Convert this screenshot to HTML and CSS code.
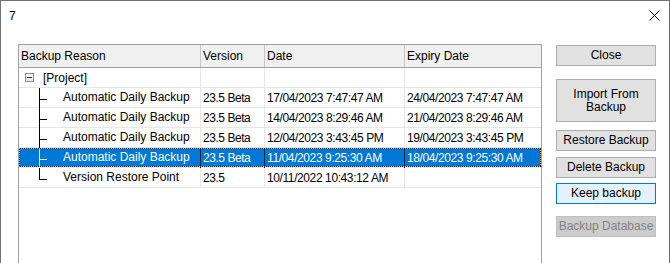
FILE: index.html
```html
<!DOCTYPE html>
<html>
<head>
<meta charset="utf-8">
<link rel="stylesheet" href="styles.css">
</head>
<body>
<div class="window">
  <div class="titlebar">
    <span class="title">7</span>
    <svg class="close-x" width="11" height="11" viewBox="0 0 11 11"><path d="M0.5 0.5 L10.5 10.5 M10.5 0.5 L0.5 10.5" stroke="#000" stroke-width="1" fill="none"/></svg>
  </div>
  <div class="content">
    <div class="listview">
      <div class="row header">
        <div class="cell c1">Backup Reason</div>
        <div class="cell">Version</div>
        <div class="cell">Date</div>
        <div class="cell">Expiry Date</div>
      </div>
      <div class="row">
        <div class="cell c1 root"><span class="minus"></span><span class="root-text">[Project]</span></div>
        <div class="cell"></div>
        <div class="cell"></div>
        <div class="cell"></div>
      </div>
      <div class="row">
        <div class="cell c1 child"><span class="twig"></span><span class="label">Automatic Daily Backup</span></div>
        <div class="cell ver">23.5 Beta</div>
        <div class="cell date">17/04/2023 7:47:47 AM</div>
        <div class="cell date">24/04/2023 7:47:47 AM</div>
      </div>
      <div class="row">
        <div class="cell c1 child"><span class="twig"></span><span class="label">Automatic Daily Backup</span></div>
        <div class="cell ver">23.5 Beta</div>
        <div class="cell date">14/04/2023 8:29:46 AM</div>
        <div class="cell date">21/04/2023 8:29:46 AM</div>
      </div>
      <div class="row">
        <div class="cell c1 child"><span class="twig"></span><span class="label">Automatic Daily Backup</span></div>
        <div class="cell ver">23.5 Beta</div>
        <div class="cell date">12/04/2023 3:43:45 PM</div>
        <div class="cell date">19/04/2023 3:43:45 PM</div>
      </div>
      <div class="row selected">
        <div class="cell c1 child"><span class="twig"></span><span class="label">Automatic Daily Backup</span></div>
        <div class="cell ver">23.5 Beta</div>
        <div class="cell date">11/04/2023 9:25:30 AM</div>
        <div class="cell date">18/04/2023 9:25:30 AM</div>
      </div>
      <div class="row">
        <div class="cell c1 child"><span class="twig last"></span><span class="label">Version Restore Point</span></div>
        <div class="cell ver">23.5</div>
        <div class="cell date">10/11/2022 10:43:12 AM</div>
        <div class="cell date"></div>
      </div>
    </div>
    <div class="buttons">
      <div class="btn btn-close">Close</div>
      <div class="btn btn-import">Import From<br>Backup</div>
      <div class="btn btn-restore">Restore Backup</div>
      <div class="btn btn-delete">Delete Backup</div>
      <div class="btn btn-keep">Keep backup</div>
      <div class="btn btn-db disabled">Backup Database</div>
    </div>
  </div>
</div>
</body>
</html>
```
FILE: styles.css
```css
html, body {
  margin: 0;
  padding: 0;
  background: #ffffff;
  overflow: hidden;
}
body {
  width: 670px;
  height: 263px;
  font-family: "Liberation Sans", Arial, sans-serif;
  font-size: 12px;
  color: #000;
}
.window {
  box-sizing: border-box;
  width: 670px;
  height: 263px;
  border: 1px solid #707070;
  border-bottom: none;
  background: #fff;
  display: flex;
  flex-direction: column;
}
.titlebar {
  height: 43px;
  flex: none;
  box-sizing: border-box;
  padding: 7px 9px 0 8px;
  display: flex;
  justify-content: space-between;
  align-items: flex-start;
}
.title {
  line-height: 16px;
}
.close-x {
  margin-top: 2px;
}
.content {
  flex: 1;
  display: flex;
  padding-left: 17px;
  min-height: 0;
}
.listview {
  width: 524px;
  box-sizing: border-box;
  border: 1px solid #a0a0a0;
  border-bottom: none;
  background: #fff;
}
.row {
  display: grid;
  grid-template-columns: 181px 64px 140px 137px;
  height: 20px;
  box-sizing: border-box;
  border-bottom: 1px solid #e6e6e6;
  position: relative;
}
.row.header {
  height: 23px;
  background: #f0f0f0;
  border-bottom: 1px solid #a0a0a0;
}
.cell {
  display: flex;
  align-items: center;
  padding-left: 2px;
  border-left: 1px solid #e6e6e6;
  white-space: nowrap;
  overflow: visible;
  min-width: 0;
}
.row.header .cell {
  border-left-color: #c8c8c8;
}
.cell.c1 {
  border-left: none;
}
.cell.date {
  letter-spacing: -0.4px;
}
.cell.ver {
  letter-spacing: -0.45px;
}
.root {
  padding-left: 6px;
}
.minus {
  width: 9px;
  height: 9px;
  box-sizing: border-box;
  border: 1px solid #919191;
  background: linear-gradient(#333, #333) no-repeat center / 5px 1px, linear-gradient(#ffffff, #e4e4e4);
  margin-right: 9px;
}
.child {
  padding-left: 20px;
  align-items: flex-start;
}
.twig {
  width: 8px;
  height: 20px;
  box-sizing: border-box;
  border-left: 1px solid #000;
  background: linear-gradient(#000, #000) no-repeat 0 11px / 7px 1px;
  flex: none;
}
.twig.last {
  height: 12px;
}
.label {
  margin-left: 16px;
  line-height: 19px;
}
.row.selected {
  background: #0078d7;
  color: #fff;
}
.row.selected .cell {
  border-left-color: #0c1e3a;
}
.row.selected .twig {
  border-left-color: #ffffff;
  background: linear-gradient(#ffffff, #ffffff) no-repeat 0 11px / 7px 1px;
}
.row.selected::after {
  content: "";
  position: absolute;
  left: 0;
  right: 0;
  top: 0;
  bottom: 0;
  pointer-events: none;
  background:
    repeating-linear-gradient(90deg, #f7a035 0 1px, #1a1a1a 1px 2px) left top / 100% 1px no-repeat,
    repeating-linear-gradient(90deg, #f7a035 0 1px, #1a1a1a 1px 2px) left bottom / 100% 1px no-repeat,
    repeating-linear-gradient(180deg, #f7a035 0 1px, #1a1a1a 1px 2px) left top / 1px 100% no-repeat,
    repeating-linear-gradient(180deg, #f7a035 0 1px, #1a1a1a 1px 2px) right top / 1px 100% no-repeat;
}
.buttons {
  margin-left: 14px;
  width: 100px;
  display: flex;
  flex-direction: column;
}
.btn {
  box-sizing: border-box;
  height: 21px;
  flex: none;
  border: 1px solid #adadad;
  background: #e1e1e1;
  display: flex;
  align-items: center;
  justify-content: center;
  text-align: center;
  line-height: 13px;
}
.btn-close { margin-top: 1px; }
.btn-import { margin-top: 13px; height: 43px; }
.btn-restore { margin-top: 8px; }
.btn-delete { margin-top: 6px; }
.btn-keep {
  margin-top: 5px;
  background: #e5f1fb;
  border-color: #0078d7;
}
.btn-db { margin-top: 12px; }
.btn.disabled {
  background: #cccccc;
  border-color: #bfbfbf;
  color: #838383;
}
```
